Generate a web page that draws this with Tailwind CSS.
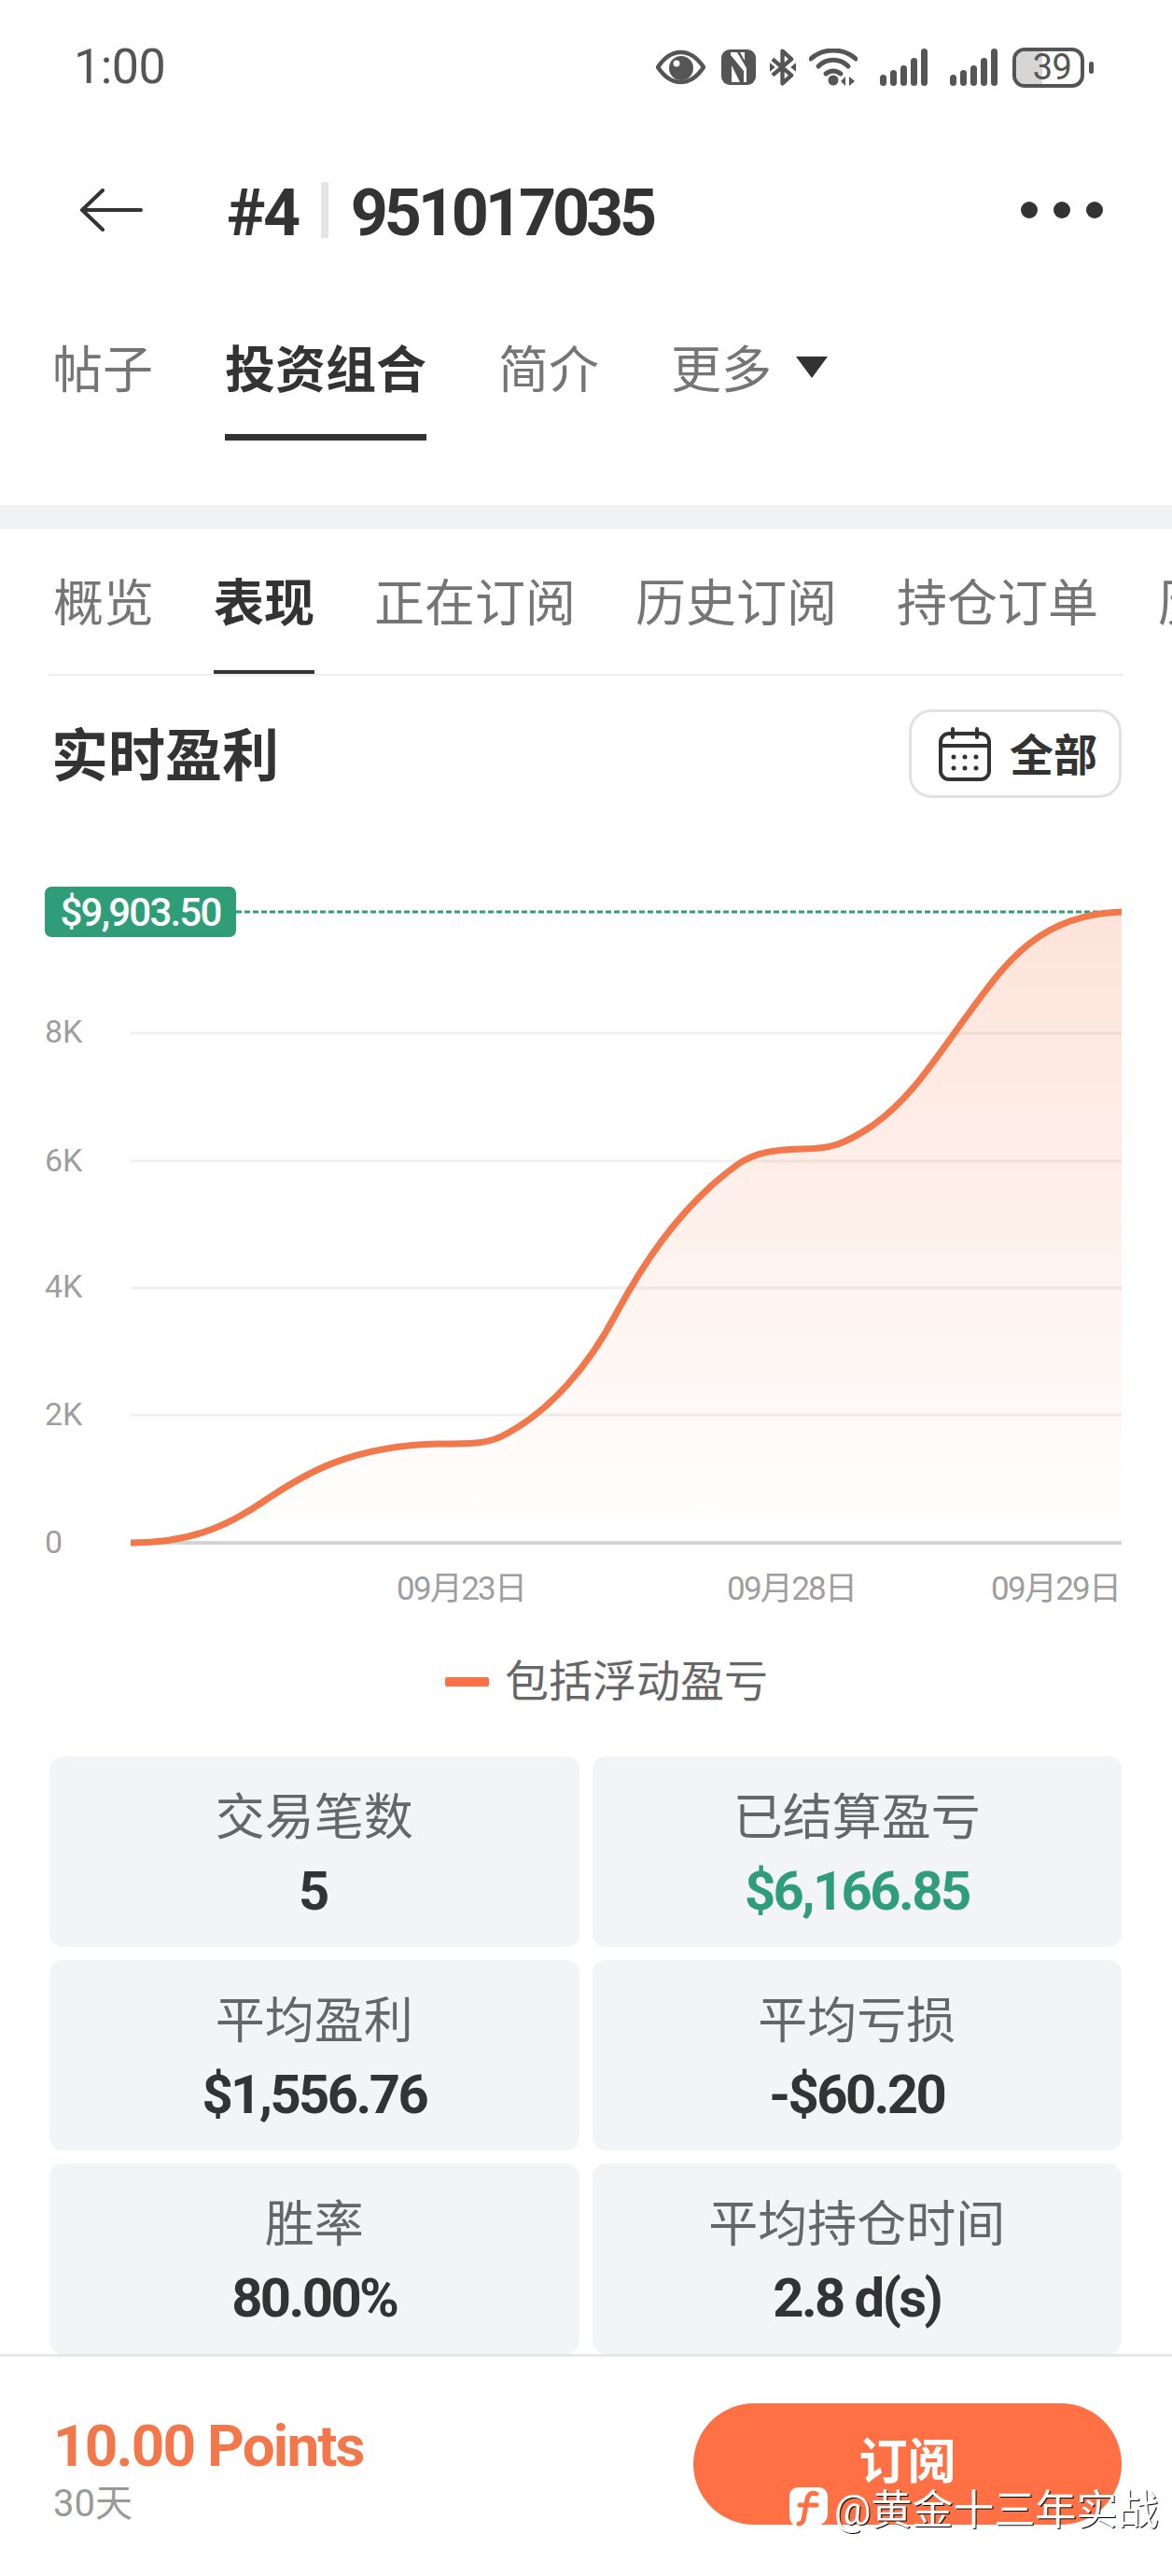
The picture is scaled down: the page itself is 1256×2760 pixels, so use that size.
<!DOCTYPE html>
<html lang="zh-CN">
<head>
  <meta charset="UTF-8" />
  <title>#4 951017035</title>
  <script src="https://cdn.jsdelivr.net/npm/@tailwindcss/browser@4"></script>
</head>
<body class="bg-white font-['Roboto','Noto_Sans_CJK_SC',sans-serif] text-[#333]">
  <div class="relative w-[1256px] h-[2760px] overflow-hidden bg-white">

    <!-- Status bar -->
    <div class="h-[144px] flex items-center pl-[79px] pr-[84px] text-[#555]">
      <span class="text-[52px] tracking-[-0.500px]">1:00</span>
      <div class="ml-auto flex items-center">
        <svg class="w-[53px] h-[38px]" viewBox="0 0 53 38">
          <path d="M2 19C10 7 18 3 26.500 3S43 7 51 19C43 31 35 35 26.500 35S10 31 2 19Z" fill="none" stroke="#555" stroke-width="4.500" stroke-linejoin="round"/>
          <circle cx="27" cy="20" r="13" fill="#555"/>
          <circle cx="22" cy="15" r="3.500" fill="#fff"/>
        </svg>
        <svg class="w-[37px] h-[38px] ml-[17px]" viewBox="0 0 37 38">
          <rect width="37" height="38" rx="9" fill="#555"/>
          <path d="M10 3H17L27 20V35H24V23L10 6Z" fill="#fff"/>
          <path d="M20 3H25V12Z" fill="#fff"/>
          <path d="M11 17L20 35H11Z" fill="#fff"/>
        </svg>
        <svg class="w-[28px] h-[40px] ml-[15px]" viewBox="0 0 29 40">
          <path d="M3 11L24 29L14 38V2L24 11L3 29" fill="none" stroke="#555" stroke-width="4.500" stroke-linejoin="round"/>
          <path d="M0 15L6 20L0 25ZM29 15L23 20L29 25Z" fill="#555"/>
        </svg>
        <svg class="w-[52px] h-[40px] ml-[14px]" viewBox="0 0 52 40">
          <g fill="none" stroke="#555" stroke-width="5" stroke-linecap="round">
            <path d="M2 11C15 -1 37 -1 50 11"/>
            <path d="M10 19C19 10 33 10 42 19"/>
            <path d="M18 27C23 23 29 23 34 27"/>
          </g>
          <circle cx="26" cy="34" r="5.500" fill="#555"/>
          <path d="M39 40V30L34 35ZM43 30V40L49 35Z" fill="#555"/>
        </svg>
        <svg class="w-[51px] h-[40px] ml-[24px]" viewBox="0 0 51 40" fill="#555">
          <rect x="0" y="28" width="7" height="12" rx="3.500"/><rect x="11" y="23" width="7" height="17" rx="3.500"/><rect x="22" y="18" width="7" height="22" rx="3.500"/><rect x="33" y="10" width="7" height="30" rx="3.500"/><rect x="44" y="0" width="7" height="40" rx="3.500"/>
        </svg>
        <svg class="w-[51px] h-[40px] ml-[24px]" viewBox="0 0 51 40" fill="#555">
          <rect x="0" y="28" width="7" height="12" rx="3.500"/><rect x="11" y="23" width="7" height="17" rx="3.500"/><rect x="22" y="18" width="7" height="22" rx="3.500"/><rect x="33" y="10" width="7" height="30" rx="3.500"/><rect x="44" y="0" width="7" height="40" rx="3.500"/>
        </svg>
        <div class="relative ml-[16px] w-[77px] h-[43px] rounded-[13px] border-[4px] border-[#555] overflow-hidden flex items-center justify-center">
          <div class="absolute left-0 top-0 bottom-0 w-[28px] bg-[#d6d6d6]"></div>
          <span class="relative text-[38px] leading-none pl-[8px] tracking-[-0.500px]">39</span>
        </div>
        <div class="ml-[5px] w-[5px] h-[13px] rounded-full bg-[#555]"></div>
      </div>
    </div>

    <!-- Title row -->
    <div class="h-[162px] flex items-center pl-[85px] pr-[74px]">
      <svg class="w-[68px] h-[46px]" viewBox="0 0 68 46" fill="none" stroke="#333" stroke-width="4" stroke-linecap="round" stroke-linejoin="round">
        <path d="M25 2L3 23L25 44M3 23H66"/>
      </svg>
      <span class="ml-[90px] mt-[6px] text-[70px] leading-none font-bold tracking-[-2.500px]">#4</span>
      <div class="ml-[24px] w-[8px] h-[60px] bg-[#e5e5e5]"></div>
      <span class="ml-[24px] mt-[6px] text-[70px] leading-none font-bold tracking-[-4.100px]">951017035</span>
      <div class="ml-auto flex gap-[17px]">
        <div class="size-[18px] rounded-full bg-[#333]"></div>
        <div class="size-[18px] rounded-full bg-[#333]"></div>
        <div class="size-[18px] rounded-full bg-[#333]"></div>
      </div>
    </div>

    <!-- Main tabs -->
    <div class="h-[166px] flex pl-[56px] gap-[77px] text-[54px] text-[#757575]">
      <div class="pt-[59px] leading-[66px]">帖子</div>
      <div class="relative pt-[59px] leading-[66px] font-bold text-[#333]">投资组合
        <div class="absolute left-0 right-0 bottom-0 h-[7px] bg-[#333]"></div>
      </div>
      <div class="pt-[59px] leading-[66px]">简介</div>
      <div class="pt-[59px] leading-[66px] flex items-start">更多
        <svg class="w-[34px] h-[23px] ml-[26px] mt-[17px]" viewBox="0 0 34 23"><path d="M0 0H34L17 23Z" fill="#333"/></svg>
      </div>
    </div>

    <div class="mt-[69px] h-[26px] bg-[#f1f2f4]"></div>

    <!-- Sub tabs -->
    <div class="relative h-[157px] overflow-hidden">
      <div class="flex h-[156px] pl-[57px] gap-[64px] text-[54px] text-[#757575] whitespace-nowrap">
        <div class="pt-[48px] leading-[66px]">概览</div>
        <div class="relative pt-[48px] leading-[66px] font-bold text-[#333]">表现
          <div class="absolute left-0 right-0 bottom-[0px] h-[5px] bg-[#333]"></div>
        </div>
        <div class="pt-[48px] leading-[66px]">正在订阅</div>
        <div class="pt-[48px] leading-[66px]">历史订阅</div>
        <div class="pt-[48px] leading-[66px]">持仓订单</div>
        <div class="pt-[48px] leading-[66px]">历史</div>
      </div>
      <div class="absolute left-[52px] right-[52px] bottom-0 h-[2px] bg-[#eeeeee]"></div>
    </div>

    <!-- Heading -->
    <div class="h-[156px] flex items-start justify-between pl-[55px] pr-[54px] pt-[36px]">
      <h2 class="pt-[3px] text-[61px] leading-[96px] font-bold">实时盈利</h2>
      <div class="w-[228px] h-[95px] rounded-[24px] border-[3px] border-[#e2e2e2] flex items-center pl-[29px]">
        <svg class="w-[56px] h-[58px]" viewBox="0 0 56 58" fill="none" stroke="#333" stroke-width="4" stroke-linecap="round">
          <rect x="2" y="7" width="52" height="49" rx="9"/>
          <path d="M2 20H54M15 2V11M41 2V11"/>
          <g fill="#333" stroke="none">
            <circle cx="16" cy="32" r="2.500"/><circle cx="28" cy="32" r="2.500"/><circle cx="40" cy="32" r="2.500"/>
            <circle cx="16" cy="44" r="2.500"/><circle cx="28" cy="44" r="2.500"/><circle cx="40" cy="44" r="2.500"/>
          </g>
        </svg>
        <span class="ml-[20px] mt-[3px] text-[47px] font-bold leading-none">全部</span>
      </div>
    </div>

    <!-- Chart -->
    <div class="relative h-[860px]">
      <svg class="block w-[1256px] h-[860px]" viewBox="0 880 1256 860" font-family="Roboto, 'Noto Sans CJK SC', sans-serif">
        <defs>
          <linearGradient id="area" x1="0" y1="977" x2="0" y2="1653" gradientUnits="userSpaceOnUse">
            <stop offset="0" stop-color="#fde3d9"/>
            <stop offset="1" stop-color="#ffffff"/>
          </linearGradient>
        </defs>
        <path d="M140 1653C200 1653 240 1638 285 1607C325 1580 375 1549 470 1547C510 1547 525 1547 545 1535C590 1510 630 1465 660 1408C685 1362 725 1295 790 1248C810 1234 830 1232 860 1231C890 1231 905 1226 935 1206C975 1178 1000 1138 1035 1090C1075 1036 1110 980 1202 977V1653H140Z" fill="url(#area)"/>
        <path d="M140 1107H1202M140 1244H1202M140 1380H1202M140 1516H1202" stroke="#000" stroke-opacity="0.06" stroke-width="3"/>
        <path d="M140 1653H1202" stroke="#d4d4d4" stroke-width="4"/>
        <path d="M253 977H1202" stroke="#2f9e78" stroke-width="3" stroke-dasharray="6 3"/>
        <path d="M140 1653C200 1653 240 1638 285 1607C325 1580 375 1549 470 1547C510 1547 525 1547 545 1535C590 1510 630 1465 660 1408C685 1362 725 1295 790 1248C810 1234 830 1232 860 1231C890 1231 905 1226 935 1206C975 1178 1000 1138 1035 1090C1075 1036 1110 980 1202 977" fill="none" stroke="#f2774a" stroke-width="7"/>
        <g font-size="34" fill="#9e9e9e">
          <text x="48" y="1117">8K</text>
          <text x="48" y="1255">6K</text>
          <text x="48" y="1390">4K</text>
          <text x="48" y="1527">2K</text>
          <text x="48" y="1664">0</text>
          <text x="425" y="1714" font-size="35" textLength="140">09月23日</text>
          <text x="779" y="1714" font-size="35" textLength="140">09月28日</text>
          <text x="1062" y="1714" font-size="35" textLength="140">09月29日</text>
        </g>
      </svg>
      <div class="absolute left-[48px] top-[70px] w-[205px] h-[54px] rounded-[7px] bg-[#2f9e78] flex items-center justify-center text-[42px] font-medium tracking-[-1.800px] text-white">$9,903.50</div>
    </div>

    <!-- Legend -->
    <div class="mt-[21px] mb-[39px] h-[82px] flex items-start justify-center pl-[44px]">
      <div class="mt-[36px] w-[47px] h-[10px] rounded-[2px] bg-[#ff7144]"></div>
      <span class="ml-[17px] text-[47px] leading-[82px] text-[#666]">包括浮动盈亏</span>
    </div>

    <!-- Stats -->
    <div class="grid grid-cols-2 gap-x-[14px] gap-y-[14px] pl-[53px] pr-[54px] text-center">
      <div class="h-[204px] rounded-[14px] bg-[#f3f4f6] pt-[36px]">
        <div class="text-[53px] leading-[60px] text-[#666]">交易笔数</div>
        <div class="mt-[17px] text-[58px] leading-[62px] font-bold text-[#333]">5</div>
      </div>
      <div class="h-[204px] rounded-[14px] bg-[#f3f4f6] pt-[36px]">
        <div class="text-[53px] leading-[60px] text-[#666]">已结算盈亏</div>
        <div class="mt-[17px] text-[58px] leading-[62px] font-bold tracking-[-2.600px] text-[#2f9e78]">$6,166.85</div>
      </div>
      <div class="h-[204px] rounded-[14px] bg-[#f3f4f6] pt-[36px]">
        <div class="text-[53px] leading-[60px] text-[#666]">平均盈利</div>
        <div class="mt-[17px] text-[58px] leading-[62px] font-bold tracking-[-2.600px] text-[#333]">$1,556.76</div>
      </div>
      <div class="h-[204px] rounded-[14px] bg-[#f3f4f6] pt-[36px]">
        <div class="text-[53px] leading-[60px] text-[#666]">平均亏损</div>
        <div class="mt-[17px] text-[58px] leading-[62px] font-bold tracking-[-2.600px] text-[#333]">-$60.20</div>
      </div>
      <div class="h-[204px] rounded-[14px] bg-[#f3f4f6] pt-[36px]">
        <div class="text-[53px] leading-[60px] text-[#666]">胜率</div>
        <div class="mt-[17px] text-[58px] leading-[62px] font-bold tracking-[-2.600px] text-[#333]">80.00%</div>
      </div>
      <div class="h-[204px] rounded-[14px] bg-[#f3f4f6] pt-[36px]">
        <div class="text-[53px] leading-[60px] text-[#666]">平均持仓时间</div>
        <div class="mt-[17px] text-[58px] leading-[62px] font-bold tracking-[-2.600px] text-[#333]">2.8 d(s)</div>
      </div>
    </div>

    <!-- Footer -->
    <div class="h-[237px] border-t-[3px] border-[#e5e7eb] bg-white flex items-start pl-[57px] pr-[54px]">
      <div class="pt-[61px]">
        <div class="text-[62px] leading-[70px] font-bold tracking-[-1.800px] text-[#f2774a]">10.00 Points</div>
        <div class="mt-[4px] text-[40px] leading-[46px] text-[#999]">30天</div>
      </div>
      <div class="ml-auto mt-[50px] w-[459px] h-[130px] rounded-full bg-[#ff7144] flex justify-center pt-[36px] text-[52px] leading-[56px] font-bold text-white">订阅</div>
    </div>

    <!-- Watermark -->
    <div class="absolute left-[845px] top-[2664px] flex items-center text-[44px] leading-[52px] text-white [text-shadow:1px_1px_0_#000]">
      <svg class="w-[43px] h-[52px]" viewBox="0 0 43 52">
        <path d="M11 1H32C38 1 42 5 42 11V29C42 37 37 41 30 42C26 46 21 49 20 49C21 47 22 45 22 43H12C5 43 1 38 1 31V11C1 5 5 1 11 1Z" fill="#fff"/>
        <path d="M30 8C24 6 21 9 20 14L16 36C15 39 13 40 11 40M12 20H30" fill="none" stroke="#ff7144" stroke-width="5" stroke-linecap="round"/>
      </svg>
      <span class="ml-[6px]">@黄金十三年实战</span>
    </div>
  </div>
</body>
</html>
